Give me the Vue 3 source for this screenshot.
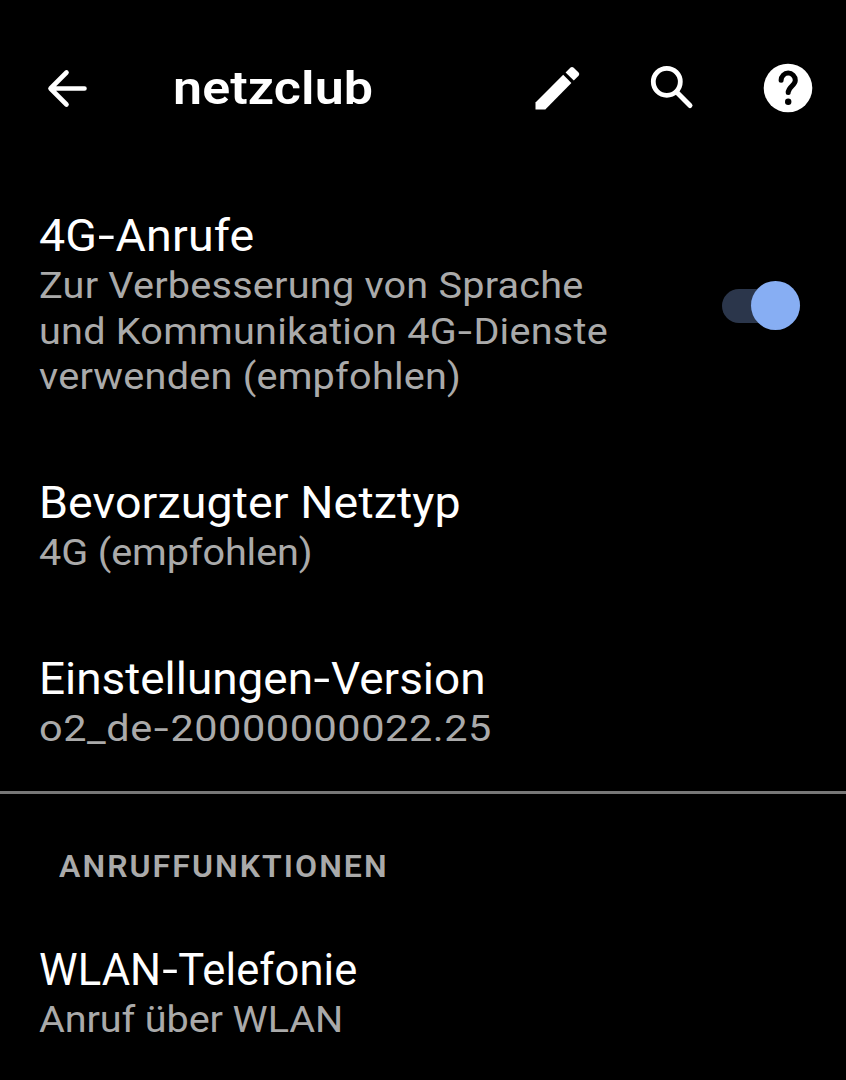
<script setup>
const preferences = [
  {
    id: 'calls',
    title: '4G-Anrufe',
    lines: [
      'Zur Verbesserung von Sprache',
      'und Kommunikation 4G-Dienste',
      'verwenden (empfohlen)',
    ],
    toggle: true,
  },
  { id: 'network', title: 'Bevorzugter Netztyp', lines: ['4G (empfohlen)'] },
  { id: 'version', title: 'Einstellungen-Version', lines: ['o2_de-20000000022.25'] },
]
const callFeatures = [
  { id: 'wifi', title: 'WLAN-Telefonie', lines: ['Anruf über WLAN'] },
]

// Hyphens are set wider than the typeface's own, so they get their own span.
const parts = (text) => text.split(/(-)/)
</script>

<template>
  <main class="screen">
    <header class="bar">
      <svg class="icon back" viewBox="0 0 48 48" aria-label="Zurück">
        <path d="M22.5 8.5 6.5 24.5 22.5 40.5M7 24.5H40.5" />
      </svg>
      <h1>netzclub</h1>
      <svg class="icon edit" viewBox="0 0 48 48">
        <path d="M1.5 38.5 29.2 10.8 37.4 19 11.3 45.5H1.5Z" />
        <path d="M31.6 8.4 36.3 3.7Q38 2.2 39.7 3.7L44.6 8.6Q46 10.2 44.6 11.8L39.8 16.6Z" />
      </svg>
      <svg class="icon search" viewBox="0 0 48 48">
        <circle cx="18.8" cy="17.8" r="13.5" />
        <path d="M28.8 28.3 42 41.5" />
      </svg>
      <svg class="icon help" viewBox="0 0 50 50">
        <circle cx="25" cy="25" r="24.3" />
        <path d="M18.1 17.2A7.1 7.1 0 0 1 32.3 17.2C32.3 22.8 25.2 23.4 25.2 29.6" />
        <circle class="dot" cx="25.2" cy="38.8" r="3.2" />
      </svg>
    </header>

    <section class="list">
      <div v-for="p in preferences" :key="p.id" class="row" :class="p.id">
        <div class="text">
          <h2><span v-for="(t, i) in parts(p.title)" :key="i" :class="{ hyphen: t === '-' }">{{ t }}</span></h2>
          <p>
            <span v-for="line in p.lines" :key="line" class="line"><span v-for="(t, i) in parts(line)" :key="i" :class="{ hyphen: t === '-' }">{{ t }}</span></span>
          </p>
        </div>
        <div v-if="p.toggle" class="switch"><i class="thumb"></i></div>
      </div>
    </section>

    <section class="features">
      <h3>ANRUFFUNKTIONEN</h3>
      <div v-for="p in callFeatures" :key="p.id" class="row" :class="p.id">
        <div class="text">
          <h2><span v-for="(t, i) in parts(p.title)" :key="i" :class="{ hyphen: t === '-' }">{{ t }}</span></h2>
          <p><span v-for="line in p.lines" :key="line" class="line">{{ line }}</span></p>
        </div>
      </div>
    </section>
  </main>
</template>

<style>
body { background: #000; }
</style>

<style scoped>
.screen {
  height: 1080px;
  overflow: hidden;
  background: #000;
  color: #fff;
  font-family: Roboto, "Liberation Sans", sans-serif;
}
h1, h2, h3, p { margin: 0; font-weight: 400; white-space: nowrap; }
.bar {
  display: flex;
  align-items: center;
  height: 128px;
  padding: 24px 33px 20px 44px;
}
.icon { flex: none; width: 48px; height: 48px; fill: #fff; }
.back { fill: none; stroke: #fff; stroke-width: 4.6; stroke-linecap: round; stroke-linejoin: round; }
h1 {
  width: 361px;
  margin-left: 81px;
  font-size: 46px;
  font-weight: 600;
  line-height: 54px;
  letter-spacing: 0.1px;
  transform: scaleX(1.13);
  transform-origin: left;
}
.search { margin-left: 66px; }
.search circle { fill: none; stroke: #fff; stroke-width: 4.8; }
.search path { stroke: #fff; stroke-width: 5; stroke-linecap: round; }
.help { width: 50px; height: 50px; margin-left: 67px; }
.help path { fill: none; stroke: #000; stroke-width: 5; stroke-linecap: round; }
.help .dot { fill: #000; }
.row {
  display: flex;
  align-items: center;
  justify-content: space-between;
  padding: 39.25px 46px 39.25px 39px;
}
h2 {
  width: max-content;
  padding-top: 1px;
  margin-bottom: 1px;
  font-size: 43.5px;
  line-height: 50px;
  transform: scaleX(1.07);
  transform-origin: left;
}
p { font-size: 37px; line-height: 45.5px; color: #aaa; }
.line { display: block; width: max-content; transform: scaleX(1.07); transform-origin: left; }
.hyphen { display: inline-block; margin: 0 2.5px; transform: scaleX(1.3); }
.calls h2 { letter-spacing: 0.15px; }
.calls .line { letter-spacing: 0.22px; }
.network h2 { letter-spacing: 0.1px; }
.network .line { letter-spacing: -0.1px; }
.version h2 { transform: scaleX(1.055); }
.version .line { letter-spacing: 0.5px; transform: scaleX(1.12); }
.wifi h2 { letter-spacing: 0.1px; transform: none; }
.wifi .line { letter-spacing: -0.1px; }
.switch {
  display: flex;
  justify-content: flex-end;
  align-items: center;
  width: 78px;
  height: 34px;
  border-radius: 17px;
  background: #2b364b;
}
.thumb { width: 49px; height: 49px; border-radius: 50%; background: #87aef3; flex: none; }
.features { border-top: 3px solid #777; }
h3 {
  width: max-content;
  height: 112px;
  margin-left: 59px;
  font-size: 30.5px;
  font-weight: 600;
  line-height: 146px;
  letter-spacing: 1.95px;
  color: #aaa;
  transform: scaleX(1.05);
  transform-origin: left;
}
</style>
